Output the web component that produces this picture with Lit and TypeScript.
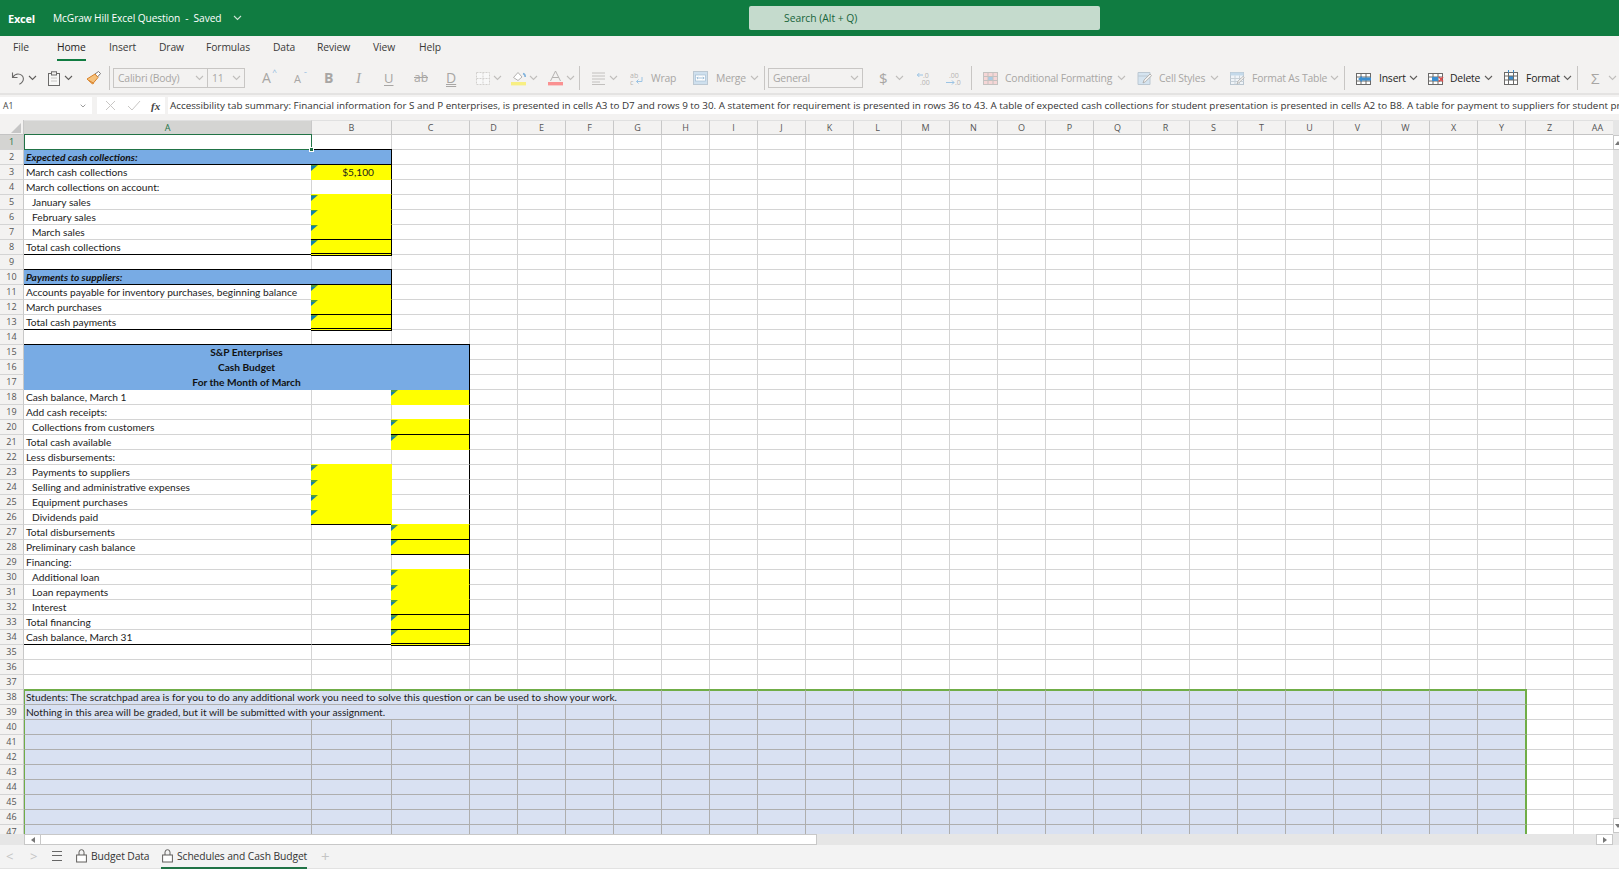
import { LitElement, html, css, svg, nothing, TemplateResult } from "lit";
import { customElement } from "lit/decorators.js";

const chev = (c = "#8a8886") => html`<svg class="chev" width="9" height="6" viewBox="0 0 9 6"><path d="M1 1l3.5 3.5L8 1" fill="none" stroke=${c} stroke-width="1.1"/></svg>`;
const ic = (w: number, h: number, body: unknown) => html`<svg width=${w} height=${h} viewBox="0 0 ${w} ${h}">${body}</svg>`;

const G = "#b5b3b1";
const D = "#6b6a69";
const gridIcon = (stroke: string, extra: unknown = nothing) => svg`
  <rect x=".5" y="2.5" width="14" height="11" fill="#fff" stroke=${stroke}/>
  <path d="M.5 6h14M.5 10h14M5 2.5v11M10 2.5v11" stroke=${stroke} fill="none"/>${extra}`;

const icons: Record<string, TemplateResult> = {
  undo: ic(15, 15, svg`<path d="M1.5 1.5v5h5M1.8 6.3C3 4.2 4.8 3 7 3c3 0 5.4 2.2 5.4 4.8 0 2.4-1.6 4.2-4 5.4" fill="none" stroke=${D} stroke-width="1.1"/>`),
  clip: ic(12, 15, svg`<rect x=".5" y="2.5" width="11" height="12" fill="#f7f7f6" stroke=${D}/><rect x="3.5" y=".8" width="5" height="3.2" fill="#f3f2f1" stroke=${D}/><path d="M3 7h6M3 10h6" stroke="#c8c6c4"/>`),
  brush: ic(15, 15, svg`<path d="M9 3l3.5-2.5 2 2L11.5 6z" fill="#fff" stroke="#6b6a69" stroke-width=".9"/><path d="M1 8l8-5 3 3.5L6.5 13z" fill="#f6c27c" stroke="#d9822b"/><path d="M3 9.5l5 3" stroke="#d9822b"/>`),
  borders: ic(15, 15, svg`<rect x=".5" y="1.5" width="13" height="12" fill="#f8f8f8" stroke="#d2d0ce" stroke-dasharray="2 1"/><path d="M.5 7.5h13M7 1.5v12" stroke="#d2d0ce" stroke-dasharray="2 1"/>`),
  fill: ic(16, 16, svg`<path d="M2.5 7.5L7 2.5l4 4.5-4 3.5z" fill="#fff" stroke=${G}/><path d="M12 3.5c1.6.4 2.3 1.8 2.2 3.5" fill="none" stroke="#7fb2dc" stroke-width="1.6"/><rect y="12" width="15" height="3.4" fill="#f8ef83"/>`),
  fontcolor: ic(15, 16, svg`<path d="M2.5 11L7.5 1l5 10M4.2 7.5h6.6" fill="none" stroke=${G}/><rect y="12" width="15" height="3.4" fill="#fa9191"/>`),
  align: ic(14, 13, svg`<path d="M0 1h13M0 4h13M0 7h13M0 10h8M0 12.5h13" stroke="#c2c0be" stroke-width="1"/>`),
  wrap: ic(14, 15, svg`<text x="0" y="6.5" font-size="7" font-family="Open Sans" fill=${G}>ab</text><text x="0" y="13.5" font-size="7" font-family="Open Sans" fill=${G}>c</text><path d="M12 6v4.5H6.5M8.5 8.5l-2 2 2 2" fill="none" stroke="#9cc4e4" stroke-width="1"/>`),
  merge: ic(15, 14, svg`<rect x=".5" y=".5" width="14" height="13" fill="#cfe0ee" stroke="#bcc8d2"/><rect x="2.5" y="4" width="10" height="6" fill="#fff" stroke="#a4bdd2" stroke-width=".7"/><path d="M4 7h7M5 5.8L3.8 7 5 8.2M10 5.8L11.2 7 10 8.2" fill="none" stroke="#7fa9cb" stroke-width=".7"/>`),
  inc: ic(15, 15, svg`<text x="6" y="6.5" font-size="7" font-family="Open Sans" fill=${G}>.0</text><text x="3" y="14" font-size="7" font-family="Open Sans" fill=${G}>.00</text><path d="M0 4h6M2.3 2L.4 4l1.9 2" fill="none" stroke="#9cc4e4"/>`),
  dec: ic(15, 15, svg`<text x="3" y="6.5" font-size="7" font-family="Open Sans" fill=${G}>.00</text><text x="9" y="14" font-size="7" font-family="Open Sans" fill=${G}>.0</text><path d="M0 11.5h8M6 9.5l2 2-2 2" fill="none" stroke="#9cc4e4"/>`),
  cond: ic(15, 15, svg`<rect x=".5" y="1.5" width="14" height="12" fill="#f6d6d6" stroke="#c4c2c0"/><rect x="5" y="5.5" width="5" height="4" fill="#a9cbe6"/><path d="M.5 5.5h14M.5 9.5h14M5 1.5v12M10 1.5v12" stroke="#c4c2c0"/>`),
  styles: ic(15, 15, svg`<path d="M1 1.5h12v12H1z" fill="#d5e4f0" stroke="#bcc8d2"/><path d="M1 5h12" stroke="#bcc8d2"/><path d="M6 12l1-3 6-6 1.6 1.6-6 6z" fill="#f3f2f1" stroke="#a9a7a5" stroke-width=".8"/>`),
  table: ic(15, 15, svg`<rect x=".5" y="1.5" width="13" height="12" fill="#f0f4f8" stroke="#b9c5cf"/><rect x=".5" y="1.5" width="13" height="3" fill="#c4d9ea"/><path d="M.5 7.5h13M.5 10.5h13M5 4.5v9M9.5 4.5v9" stroke="#c8d1d8"/><path d="M7 13l1-3 5-4.5 1.3 1.3-5 4.6z" fill="#f3f2f1" stroke="#a9a7a5" stroke-width=".7"/>`),
  insert: ic(16, 15, gridIcon("#6b6a69", svg`<rect x="5" y="6.5" width="10" height="3" fill="#3b8ed0"/><path d="M6 5L2 8l4 3z" fill="#3b8ed0"/>`)),
  del: ic(16, 15, gridIcon("#6b6a69", svg`<rect x="4" y="6" width="6" height="4" fill="#3b8ed0"/><path d="M11 6l4 4.5M15 6l-4 4.5" stroke="#e04a4a" stroke-width="1.2"/>`)),
  format: ic(15, 16, svg`<rect x=".5" y="2.5" width="13" height="12" fill="#fff" stroke="#6b6a69"/><rect x="4.5" y="6" width="5" height="4" fill="#3b8ed0"/><path d="M.5 6h13M.5 10h13M4.5 2.5v12M9.5 2.5v12" stroke="#6b6a69"/><path d="M4.5 0v2.5M9.5 0v2.5" stroke="#3b8ed0"/>`),
  lock: ic(11, 15, svg`<path d="M3 7V4.2a2.5 2.5 0 0 1 5 0V7" fill="none" stroke="#605e5c"/><rect x=".6" y="7" width="9.8" height="7" fill="#fff" stroke="#605e5c"/>`),
  x: ic(13, 13, svg`<path d="M2 2l9 9M11 2l-9 9" stroke="#c8c6c4" stroke-width="1"/>`),
  check: ic(14, 13, svg`<path d="M1 7l4 4 8-9" fill="none" stroke="#c8c6c4" stroke-width="1"/>`),
};

const dis = (t: string) => html`<span class="t dis">${t}</span>`;
const on = (t: string) => html`<span class="t">${t}</span>`;
const sep = html`<span class="sep"></span>`;
const gl = (t: string, c = "") => html`<span class="gl ${c}">${t}</span>`;

const tools: [number, unknown][] = [
  [11, icons.undo], [28, chev("#605e5c")], [48, icons.clip], [64, chev("#605e5c")], [86, icons.brush], [109, sep],
  [113, html`<span class="box font"><span>Calibri (Body)</span>${chev("#c0bebc")}</span>`],
  [208, html`<span class="box size"><span>11</span>${chev("#c0bebc")}</span>`],
  [262, html`<span class="gl big">A<sup class="sup">^</sup></span>`],
  [294, html`<span class="gl big2">A<sup class="sup">ˇ</sup></span>`],
  [324, gl("B", "bold")], [356, gl("I", "ital")], [384, gl("U", "und")], [414, gl("ab", "strike")], [446, gl("D", "dund")],
  [476, icons.borders], [493, chev("#c0bebc")], [511, icons.fill], [529, chev("#c0bebc")], [548, icons.fontcolor], [566, chev("#c0bebc")], [579, sep],
  [592, icons.align], [609, chev("#c0bebc")], [630, icons.wrap], [651, dis("Wrap")], [693, icons.merge], [716, dis("Merge")], [750, chev("#c0bebc")], [764, sep],
  [768, html`<span class="box gen"><span>General</span>${chev("#c0bebc")}</span>`],
  [879, gl("$", "dollar")], [895, chev("#c0bebc")], [917, icons.inc], [946, icons.dec], [971, sep],
  [983, icons.cond], [1005, dis("Conditional Formatting")], [1117, chev("#c0bebc")],
  [1137, icons.styles], [1159, dis("Cell Styles")], [1210, chev("#c0bebc")],
  [1230, icons.table], [1252, dis("Format As Table")], [1330, chev("#c0bebc")], [1344, sep],
  [1356, icons.insert], [1379, on("Insert")], [1409, chev("#605e5c")],
  [1428, icons.del], [1450, on("Delete")], [1484, chev("#605e5c")],
  [1504, icons.format], [1526, on("Format")], [1563, chev("#605e5c")], [1577, sep],
  [1591, gl("Σ", "sigma")], [1608, chev("#c0bebc")], [1619, nothing],
];

const tabs: [string, number][] = [["File", 13], ["Home", 57], ["Insert", 109], ["Draw", 159], ["Formulas", 206], ["Data", 273], ["Review", 317], ["View", 373], ["Help", 419], ["", 460]];

const formula = "Accessibility tab summary: Financial information for S and P enterprises, is presented in cells A3 to D7 and rows 9 to 30. A statement for requirement is presented in rows 36 to 43. A table of expected cash collections for student presentation is presented in cells A2 to B8. A table for payment to suppliers for student presentation is presented in cells A10 to B13.";

const labels: Record<number, [string, number?]> = {
  3: ["March cash collections"], 4: ["March collections on account:"], 5: ["January sales", 1], 6: ["February sales", 1], 7: ["March sales", 1], 8: ["Total cash collections"],
  11: ["Accounts payable for inventory purchases, beginning balance"], 12: ["March purchases"], 13: ["Total cash payments"],
  18: ["Cash balance, March 1"], 19: ["Add cash receipts:"], 20: ["Collections from customers", 1], 21: ["Total cash available"], 22: ["Less disbursements:"],
  23: ["Payments to suppliers", 1], 24: ["Selling and administrative expenses", 1], 25: ["Equipment purchases", 1], 26: ["Dividends paid", 1],
  27: ["Total disbursements"], 28: ["Preliminary cash balance"], 29: ["Financing:"], 30: ["Additional loan", 1], 31: ["Loan repayments", 1], 32: ["Interest", 1], 33: ["Total financing"], 34: ["Cash balance, March 31"],
};
const yB = new Set([3, 5, 6, 7, 8, 11, 12, 13, 23, 24, 25, 26]);
const yC = new Set([18, 20, 21, 27, 28, 30, 31, 32, 33, 34]);
const topB = new Set([3, 8, 11, 13]);
const topC = new Set([21, 28, 33, 34]);
const rightB = new Set([3, 4, 5, 6, 7, 8, 11, 12, 13]);
const colNames = [..."ABCDEFGHIJKLMNOPQRSTUVWXYZ", "AA"];

@customElement("app-root")
export class AppRoot extends LitElement {
  static styles = css`
    :host { display: block; width: 1619px; height: 872px; overflow: hidden; background: #f3f2f1; font-family: "Open Sans", "Noto Sans", sans-serif; color: #252423; position: relative; }
    svg { display: block; flex: none; }
    .top { height: 36px; background: #107c41; color: #fff; display: flex; align-items: center; }
    .brand { font-weight: 700; font-size: 11px; margin-left: 8px; width: 45px; letter-spacing: -.2px; }
    .doc { font-size: 10.2px; width: 180px; white-space: pre; letter-spacing: -.1px; }
    .docchev { width: 516px; }
    .search { width: 351px; height: 24px; background: #c5dbcd; border-radius: 2px; box-sizing: border-box; padding-left: 35px; font-size: 10.3px; line-height: 24px; color: #17643a; }
    .tabs { height: 24px; position: relative; display: flex; }
    .tab { font-size: 10.3px; line-height: 22px; height: 24px; white-space: nowrap; color: #3b3a39; box-sizing: border-box; letter-spacing: -.1px; }
    .tab.active { color: #252423; }
    .tab.active span { display: inline-block; height: 22.5px; border-bottom: 2px solid #107c41; }
    .tools { height: 24px; margin-top: 6px; display: flex; }
    .slot { display: flex; align-items: center; height: 24px; flex: none; white-space: nowrap; }
    .t { font-size: 10.4px; color: #252423; letter-spacing: -.2px; }
    .t.dis { color: #a8a6a4; }
    .sep { width: 1px; height: 24px; background: #c8c6c4; }
    .box { display: flex; align-items: center; justify-content: space-between; box-sizing: border-box; height: 20px; border: 1px solid #c8c6c4; padding: 0 3px 0 4px; font-size: 10.4px; color: #a8a6a4; letter-spacing: -.2px; }
    .font { width: 96px; } .size { width: 38px; border-left-width: 1px; margin-left: -1px; } .gen { width: 95px; }
    .gl { color: #a8a6a4; font-size: 13px; line-height: 1; position: relative; }
    .big { font-size: 14px; font-family: "Open Sans", sans-serif; }
    .big2 { font-size: 11px; }
    .sup { font-size: 8px; color: #8ab8de; position: absolute; top: -3px; right: -6px; }
    .bold { font-weight: 700; font-size: 14px; }
    .ital { font-style: italic; font-family: "Liberation Serif", serif; font-size: 15px; }
    .und { text-decoration: underline; text-underline-offset: 2px; }
    .strike { text-decoration: line-through; font-size: 12px; }
    .dund { text-decoration: underline double; text-underline-offset: 1px; font-size: 14px; }
    .dollar { font-size: 15px; }
    .sigma { font-size: 15px; }
    .fbar { height: 27px; border-top: 2px solid #e4e3e2; box-sizing: border-box; margin-top: 3px; display: flex; padding-top: 2px; }
    .name { width: 92px; height: 17px; background: #fff; display: flex; align-items: center; justify-content: space-between; box-sizing: border-box; padding: 0 3px; font-size: 8.6px; color: #444; }
    .name .chev { width: 6px; height: 4px; margin-right: 3px; }
    .fn { margin-left: 5px; width: 68px; height: 17px; background: #fff; display: flex; align-items: center; box-sizing: border-box; padding-left: 7px; gap: 10px; }
    .fx { font-family: "Liberation Serif", serif; font-style: italic; font-size: 11px; color: #444; font-weight: 700; }
    .input { margin-left: 3px; flex: 1; height: 17px; background: #fff; font-size: 9.85px; line-height: 16px; padding-left: 2px; white-space: nowrap; overflow: hidden; color: #333; }
    .sheet { display: flex; height: 714px; background: #fff; }
    .gridwrap { width: 1613px; height: 714px; overflow: hidden; flex: none; }
    .grid { display: grid; width: 1622px; grid-template-columns: 24px 288px 80px 78px repeat(24, 48px); grid-auto-rows: 15px; font-family: Lato, "Open Sans", sans-serif; font-size: 10.2px; }
    .ch { background: #f3f2f1; border-top: 1px solid #e0e0e0; border-right: 1px solid #c8c8c8; border-bottom: 1px solid #c4c4c4; box-sizing: border-box; text-align: center; font-family: "Open Sans", sans-serif; font-size: 9px; line-height: 13px; color: #555; }
    .ch.sel { background: #d4d4d2; color: #217346; }
    .corner { background: #f3f2f1; position: relative; border-bottom: 1px solid #c4c4c4; border-right: 1px solid #c8c8c8; box-sizing: border-box; }
    .corner::after { content: ""; position: absolute; right: 2px; bottom: 1px; border-left: 10px solid transparent; border-bottom: 10px solid #c6c6c6; }
    .rh { background: #f3f2f1; border-right: 1px solid #c8c8c8; border-bottom: 1px solid #d4d4d4; box-sizing: border-box; text-align: center; font-family: "Open Sans", sans-serif; font-size: 9px; line-height: 14px; color: #555; }
    .rh.sel { background: #d4d4d2; color: #217346; }
    .c { box-sizing: border-box; border-right: 1px solid #d4d4d4; border-bottom: 1px solid #d4d4d4; white-space: nowrap; line-height: 14px; padding-left: 2px; color: #1c1c1c; background: #fff; min-width: 0; position: relative; }
    .c.ind { padding-left: 8px; }
    .c.rb { border-right-color: #000; }
    .c.bb { border-bottom-color: #000; }
    .c.y { background: #ff0; border-right-color: #ff0; border-bottom-color: #ff0; margin: -1px 0 0 -1px; border-top: 1px solid #ff0; padding-left: 0; z-index: 1; }
    .c.y.rb { border-right-color: #000; }
    .c.y.bb { border-bottom-color: #000; }
    .c.y.tb { border-top-color: #000; }
    .c.y.dbl { border-bottom: 3px double #000; margin-bottom: -1px; z-index: 2; }
    .val { display: block; text-align: right; padding-right: 17px; }
    .flag { position: absolute; left: 0; top: 0; width: 7px; height: 6px; clip-path: polygon(0 0, 100% 0, 0 100%); background: linear-gradient(#4e9a3c 0 25%, #0f80ad 25%); }
    .blue { background: #78abe4; border-right: 1px solid #000; border-bottom: 1px solid #000; border-top: 1px solid #000; margin-top: -1px; z-index: 2; font-weight: 700; font-style: italic; color: #111; line-height: 15px; padding-left: 2px; position: relative; }
    .hdr { grid-column: span 3; grid-row: span 3; background: #78abe4; border-right: 1px solid #000; border-top: 1px solid #000; margin-top: -1px; box-sizing: border-box; text-align: center; font-weight: 700; line-height: 15px; color: #111; z-index: 2; position: relative; }
    .scr { background: #d9e1f2; border-right-color: #aeaeae; border-bottom-color: #aeaeae; }
    .scr.first { border-left: 1px solid #70ad47; padding-left: 1px; }
    .scr.toprow { border-top: 2px solid #70ad47; margin-top: -1px; line-height: 13px; z-index: 2; }
    .scr.last { border-right: 2px solid #70ad47; margin-right: -1px; z-index: 2; }
    .selbox { position: absolute; left: 0; right: -1px; top: -1px; bottom: -1px; border: 1.5px solid #217346; z-index: 3; pointer-events: none; }
    .selbox::after { content: ""; position: absolute; right: -3px; bottom: -3px; width: 3px; height: 3px; background: #217346; border: 1px solid #fff; }
    .vs { width: 6px; flex: none; background: #e6e6e6; display: flex; flex-direction: column; justify-content: space-between; padding-top: 15px; padding-bottom: 1px; box-sizing: border-box; }
    .vb { height: 15px; background: #fff; border: 1px solid #c8c8c8; border-right: 0; box-sizing: border-box; padding: 5px 0 0 1px; }
    .vtri { display: block; width: 0; height: 0; border-left: 3px solid transparent; border-right: 3px solid transparent; }
    .vtri.u { border-bottom: 4px solid #777; } .vtri.d { border-top: 4px solid #777; }
    .hs { height: 11px; display: flex; background: #e6e6e6; padding-left: 24px; }
    .hb { width: 17px; background: #fff; border: 1px solid #c8c8c8; box-sizing: border-box; display: flex; align-items: center; justify-content: center; }
    .tri { width: 0; height: 0; border-top: 3px solid transparent; border-bottom: 3px solid transparent; }
    .tri.l { border-right: 4px solid #777; } .tri.r { border-left: 4px solid #777; }
    .thumb { width: 776px; background: #fff; border: 1px solid #c8c8c8; border-left: 0; box-sizing: border-box; }
    .track { flex: 1; }
    .hgap { width: 6px; flex: none; }
    .foot { height: 24px; background: #f3f3f3; border-bottom: 1px solid #e2e2e2; display: flex; align-items: center; box-sizing: border-box; font-size: 10.3px; color: #333; letter-spacing: -.1px; }
    .fslot { display: flex; align-items: center; height: 24px; flex: none; white-space: nowrap; box-sizing: border-box; padding-bottom: 2px; }
    .fslot.flush { padding-bottom: 0; }
    .sp { width: 6px; } .w24 { width: 24px; } .w22 { width: 22px; } .bud { width: 85px; gap: 4px; } .w160 { width: 160px; }
    .stab { display: flex; align-items: center; height: 24px; gap: 4px; box-sizing: border-box; padding-left: 1px; width: 146px; border-bottom: 2px solid #217346; overflow: visible; }
    .nav { color: #c4c4c4; font-size: 13px; }
    .plus { color: #c4c4c4; font-size: 15px; }
    .menu { width: 10px; height: 8px; border-top: 1px solid #666; border-bottom: 1px solid #666; position: relative; }
    .menu::after { content: ""; position: absolute; left: 0; right: 0; top: 3px; height: 1px; background: #666; }
    .rest { height: 3px; background: #fff; }
  `;

  private cell(r: number, c: number) {
    if (r === 1 && c === 0) return html`<div class="c"><div class="selbox"></div></div>`;
    if (r === 2 || r === 10) {
      if (c === 0) return html`<div class="blue" style="grid-column: span 2">${r === 2 ? "Expected cash collections:" : "Payments to suppliers:"}</div>`;
      if (c === 1) return nothing;
    }
    if (r === 15 && c === 0) return html`<div class="hdr">S&amp;P Enterprises<br />Cash Budget<br />For the Month of March</div>`;
    if (r >= 15 && r <= 17 && c < 3) return nothing;
    if (r >= 38) {
      if (c > 24) return html`<div class="c"></div>`;
      const span = r === 38 ? 7 : r === 39 ? 3 : 1;
      if (c > 0 && c < span) return nothing;
      const cls = `c scr ${c === 0 ? "first" : ""} ${r === 38 ? "toprow" : ""} ${c === 24 ? "last" : ""}`;
      const text = c === 0 && r === 38 ? "Students: The scratchpad area is for you to do any additional work you need to solve this question or can be used to show your work." : c === 0 && r === 39 ? "Nothing in this area will be graded, but it will be submitted with your assignment." : "";
      return span > 1 && c === 0 ? html`<div class=${cls} style="grid-column: span ${span}">${text}</div>` : html`<div class=${cls}>${text}</div>`;
    }
    if (c === 0) {
      const l = labels[r];
      const black = r === 8 || r === 13 || r === 34;
      return html`<div class="c ${l && l[1] ? "ind" : ""} ${black ? "bb" : ""}">${l ? l[0] : ""}</div>`;
    }
    if (c === 1) {
      const y = yB.has(r);
      const cls = `c ${y ? "y" : ""} ${rightB.has(r) ? "rb" : ""} ${topB.has(r) ? "tb" : ""} ${r === 8 || r === 13 ? "dbl" : ""} ${r === 26 || r === 34 ? "bb" : ""}`;
      return html`<div class=${cls}>${y ? html`<i class="flag"></i>` : nothing}${r === 3 ? html`<span class="val">$5,100</span>` : nothing}</div>`;
    }
    if (c === 2) {
      const y = yC.has(r);
      const inR = r >= 18 && r <= 34;
      const cls = `c ${y ? "y" : ""} ${inR ? "rb" : ""} ${topC.has(r) ? "tb" : ""} ${r === 34 ? "dbl" : ""} ${r === 28 ? "bb" : ""}`;
      return html`<div class=${cls}>${y ? html`<i class="flag"></i>` : nothing}</div>`;
    }
    return html`<div class="c"></div>`;
  }

  render() {
    const rows = Array.from({ length: 47 }, (_, i) => i + 1);
    return html`
      <div class="top">
        <div class="brand">Excel</div>
        <div class="doc">McGraw Hill Excel Question  -  Saved</div>
        <div class="docchev">${chev("#cfe3d6")}</div>
        <div class="search">Search (Alt + Q)</div>
      </div>
      <div class="tabs">
        ${tabs.slice(0, -1).map(([t, x], i) => html`<div class="tab ${t === "Home" ? "active" : ""}" style="margin-left:${i === 0 ? x : 0}px;width:${tabs[i + 1][1] - x}px"><span>${t}</span></div>`)}
      </div>
      <div class="tools">
        ${tools.slice(0, -1).map(([x, body], i) => html`<div class="slot" style="${i === 0 ? `margin-left:${x}px;` : ""}width:${tools[i + 1][0] - x}px">${body}</div>`)}
      </div>
      <div class="fbar">
        <div class="name"><span>A1</span>${chev("#777")}</div>
        <div class="fn">${icons.x}${icons.check}<span class="fx">fx</span></div>
        <div class="input">${formula}</div>
      </div>
      <div class="sheet">
        <div class="gridwrap">
          <div class="grid">
            <div class="corner"></div>
            ${colNames.map((n, i) => html`<div class="ch ${i === 0 ? "sel" : ""}">${n}</div>`)}
            ${rows.map((r) => html`
              <div class="rh ${r === 1 ? "sel" : ""}">${r}</div>
              ${colNames.map((_, c) => this.cell(r, c))}
            `)}
          </div>
        </div>
        <div class="vs"><div class="vb"><i class="vtri u"></i></div><div class="vb"><i class="vtri d"></i></div></div>
      </div>
      <div class="hs">
        <div class="hb"><span class="tri l"></span></div>
        <div class="thumb"></div>
        <div class="track"></div>
        <div class="hb"><span class="tri r"></span></div>
        <div class="hgap"></div>
      </div>
      <div class="foot">
        <div class="fslot sp"></div>
        <div class="fslot nav w24">&lt;</div>
        <div class="fslot nav w22">&gt;</div>
        <div class="fslot w24"><span class="menu"></span></div>
        <div class="fslot bud">${icons.lock}<span>Budget Data</span></div>
        <div class="fslot flush w160"><div class="stab">${icons.lock}<span>Schedules and Cash Budget</span></div></div>
        <div class="fslot plus">+</div>
      </div>
      <div class="rest"></div>
    `;
  }
}
